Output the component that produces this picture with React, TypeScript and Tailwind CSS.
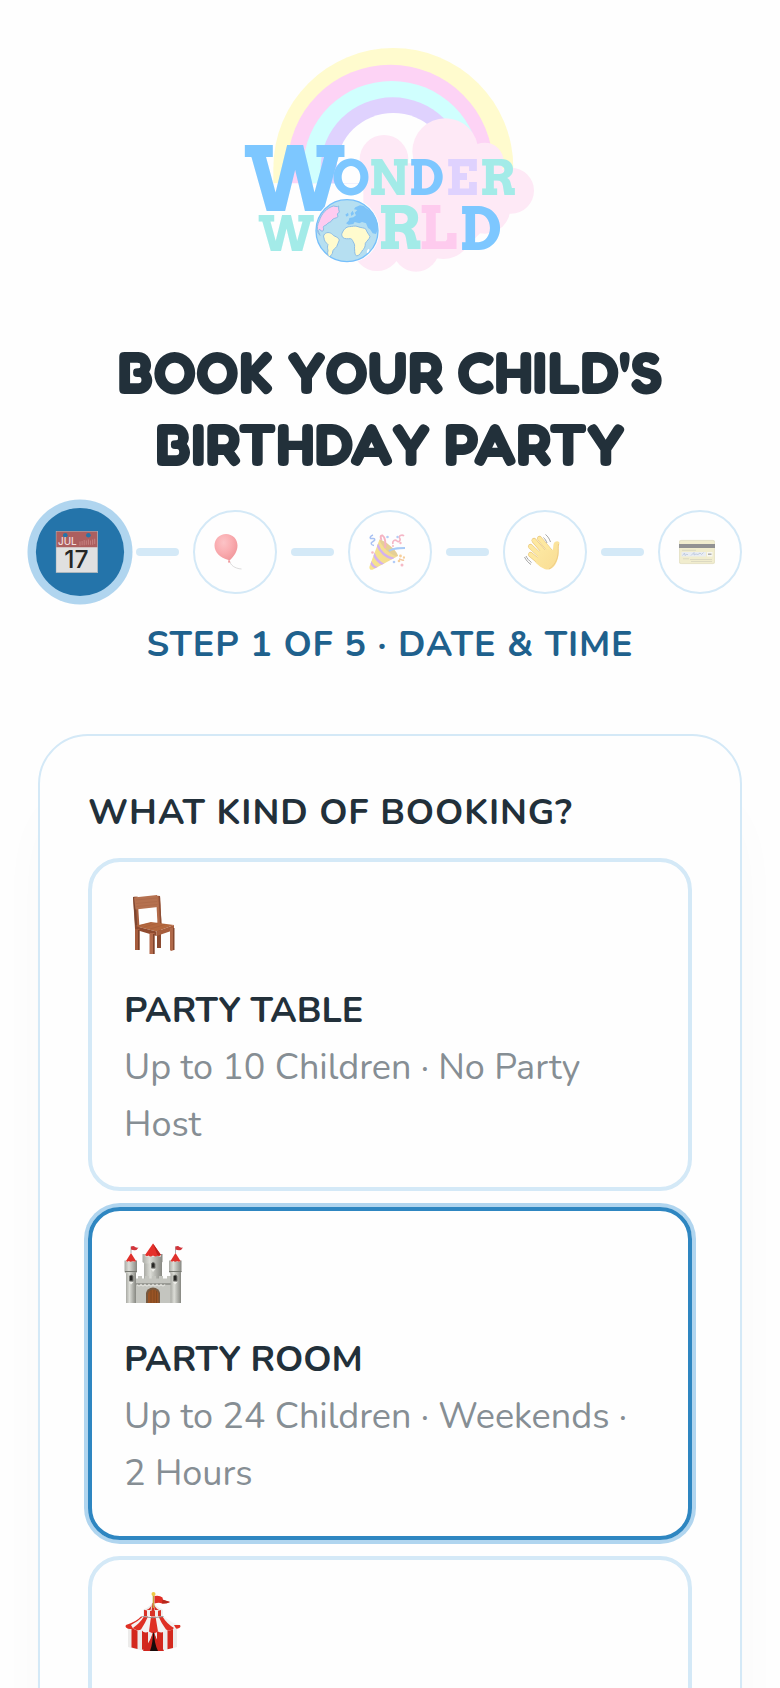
import { Fragment, useState } from 'react'
import type { ReactNode } from 'react'
import clsx from 'clsx'

function Logo() {
  return (
    <svg viewBox="0 0 960 780" className="h-[260px] w-[320px]" role="img" aria-label="Wonder World">
      <path d="M130 460V414a360 360 0 0 1 720 0Z" fill="#fffbce" />
      <path d="M172 460V414a309 310 0 0 1 618 0V460Z" fill="#fdd3f5" />
      <path d="M220 460V414a265 261 0 0 1 530 0V460Z" fill="#d0fffe" />
      <path d="M272 460V414a216 212 0 0 1 432 0V460Z" fill="#dfd2fe" />
      <path d="M320 460V414a170 165 0 0 1 340 0V460Z" fill="#fefefe" />
      <g fill="#fee9f6">
        <circle cx="462" cy="388" r="73" />
        <circle cx="646" cy="364" r="99" />
        <circle cx="764" cy="395" r="57" />
        <circle cx="843" cy="482" r="69" />
        <circle cx="765" cy="535" r="76" />
        <circle cx="640" cy="600" r="87" />
        <circle cx="558" cy="655" r="70" />
        <circle cx="441" cy="650" r="73" />
        <path d="M400 400h390v170l-90 90H400Z" />
      </g>
      <g fontFamily="Arvo, 'DejaVu Serif'" fontWeight="700" textAnchor="middle">
        <text x="194" y="543" fontSize="264" fill="#7dc7ff">W</text>
        <g fontSize="146">
          <text x="364" y="496" fill="#7dc7ff">O</text>
          <text x="476" y="496" fill="#a3ebe8">N</text>
          <text x="590" y="496" fill="#7dc7ff">D</text>
          <text x="696" y="496" fill="#dfd2fe">E</text>
          <text x="803" y="496" fill="#a3ebe8">R</text>
        </g>
        <text x="169" y="662" fontSize="146" fill="#a3ebe8">W</text>
        <g fontSize="176">
          <text x="509" y="657" fill="#a3ebe8">R</text>
          <text x="623" y="657" fill="#fecbee">L</text>
          <text x="752" y="661" fill="#7dc7ff">D</text>
        </g>
      </g>
      <circle cx="351" cy="602" r="98" fill="#fefefe" />
      <circle cx="351" cy="602" r="93" fill="#b6dff1" stroke="#76bffb" strokeWidth="4" />
      <path d="M268 572c6-20 22-38 42-44l12 2 4-2v10l2 8-6 6 2 8c-6 6-14 4-18 10-2 8-12 6-14 12-6 6-12 4-12 10 2 6 0 12-4 12l-8-6-4 4 6 14-6-8c-4-14-2-24 4-36Z" fill="#fecbf0" stroke="#8dbde6" strokeWidth="3" />
      <path d="M376 532l14-6 12 2 6 6 14 8c14 14 22 34 22 54l-6 16-10-2-8-12-6-4-6-14-12-4-8 4-14-4-4 6-14 2-8-4 8-8 2-8 12-2 8-6-4-8 8-8-10-2Z" fill="#7dc3f8" />
      <path d="M346 554l8-6 2 8-6 4ZM362 550l6-8 4 10-8 6Z" fill="#7dc3f8" />
      <path d="M284 612c8-8 20-4 26 4 6 4 16 6 18 14-2 8-6 12-8 20-4 6-12 8-12 16 0 6-6 12-10 14-6-4-6-12-4-18-2-8-2-14 0-18-6-6-12-12-12-20-2-4-2-8 2-12Z" fill="#fffbce" stroke="#8dbde6" strokeWidth="3" />
      <path d="M336 610c4-10 12-20 22-20 8 0 18-4 26 0 8 4 18 2 24 8 2 8 8 14 12 22-2 8-10 12-14 20 0 8-2 16-8 20-4 6-8 16-18 18-6-4-6-12-6-18-2-8 2-14-2-20-4-6-4-12-10-14-8 0-18 2-24-4-2-4-4-8-2-12Z" fill="#fffbce" stroke="#8dbde6" strokeWidth="3" />
      <path d="M416 656c4 2 2 10-3 13-5 0-2-11 3-13Z" fill="#fff" />
    </svg>
  )
}

function CalendarIcon() {
  return (
    <svg viewBox="0 0 40 40" className="size-10" aria-hidden="true">
      <path d="M0 0h40v40H0Z" fill="#e0e0e0" />
      <path d="M0 0h40v15.500H0Z" fill="#ac5f5f" />
      <path d="M0 0h40M0 0v40M40 0v40M0 39.500h40" stroke="#aab6bd" strokeWidth="1" />
      <circle cx="9" cy="4" r="2.200" fill="#2474aa" />
      <circle cx="31" cy="4" r="2.200" fill="#2474aa" />
      <path d="M23 10v4M25 9.500v4M27 8.500v5M29 9v4M31 8v5M33 9v4M35 8v5M37 7.500v5" stroke="#c58080" strokeWidth="1" />
      <text x="2" y="13.800" fontSize="9.500" fontFamily="Inter" fontWeight="500" fill="#f0dcdc">JUL</text>
      <text x="19.500" y="35.500" textAnchor="middle" fontSize="23.500" fontFamily="Inter" fontWeight="500" fill="#262626">17</text>
    </svg>
  )
}

function BalloonIcon() {
  return (
    <svg viewBox="0 0 36 36" className="size-9" aria-hidden="true">
      <defs>
        <radialGradient id="balloon" cx="0.4" cy="0.3" r="0.7">
          <stop offset="0" stopColor="#fcc3c6" />
          <stop offset="0.5" stopColor="#faadb1" />
          <stop offset="1" stopColor="#f09599" />
        </radialGradient>
      </defs>
      <path d="M15.500 27c1 4 5 7.500 12 8" fill="none" stroke="#dcdcdc" strokeWidth="1" />
      <path d="M12 0c6.500 0 11.500 5 11.500 11.500 0 6-3.500 11-8 15l1 2h-2.500l.500-2.500C6 24 .5 18 .5 11.500.5 5 5.500 0 12 0Z" fill="url(#balloon)" />
    </svg>
  )
}

function PopperIcon() {
  return (
    <svg viewBox="0 0 36 36" className="size-9" aria-hidden="true">
      <defs>
        <clipPath id="cone"><path d="M10.500 5.500 29 22 4 35.500c-2.500 1-4-.500-3.500-3Z" /></clipPath>
        <linearGradient id="gold">
          <stop offset="0" stopColor="#f7e48e" />
          <stop offset="1" stopColor="#f0d795" />
        </linearGradient>
      </defs>
      <g clipPath="url(#cone)">
        <path d="M0 0h36v36H0Z" fill="url(#gold)" />
        <path d="M8 10c3 8 8 13 17 15M4.500 19c2 6 6 10 11 12M1 27c2 4 4 7 8 7" fill="none" stroke="#d3b2ee" strokeWidth="2.400" />
      </g>
      <path d="M10.500 5.500C15 6 28 16 29 22c-5 1-17-9-18.500-16.500Z" fill="#e6cf96" />
      <path d="M16 14C17 9 16 3 13.500 1.500 11 1 11.500 4 12.500 6" fill="none" stroke="#f5b3c2" strokeWidth="2" />
      <path d="M20 17c4-3 9-3 16-3" fill="none" stroke="#a9cbf7" strokeWidth="2" />
      <path d="M4 1C1 2 0 5 3 4.500S7 6 4 7.500 2 11 5 11.500" fill="none" stroke="#a9c2f3" strokeWidth="1.500" />
      <path d="M24 10c-1-3 2-5 4-3s4-1 2.500-3S33 0 35 2" fill="none" stroke="#f5b7c7" strokeWidth="1.700" />
      <path d="M30 25c2 0 3 2 5 1" stroke="#f3c9a0" strokeWidth="1.500" fill="none" />
      <g fill="#f6b9c6">
        <circle cx="3.500" cy="18.500" r="1.300" />
        <circle cx="24" cy="12" r="1" />
        <circle cx="33" cy="31" r="1.500" />
        <circle cx="31.500" cy="9" r="1.200" />
      </g>
      <g fill="#b3cdf8">
        <circle cx="18.500" cy="3" r="1.300" />
        <circle cx="25" cy="28" r="1.300" />
        <circle cx="28.500" cy="3" r="1.200" />
      </g>
      <g fill="#f6cf9d">
        <circle cx="31.500" cy="22" r="1.400" />
        <circle cx="35" cy="23.500" r="1.200" />
        <circle cx="30" cy="27" r="1.300" />
      </g>
    </svg>
  )
}

function WaveIcon() {
  return (
    <svg viewBox="0 0 36 36" className="size-9" aria-hidden="true">
      <defs>
        <linearGradient id="skin" x1="0" y1="0" x2="1" y2="1">
          <stop offset="0" stopColor="#fdeaa4" />
          <stop offset="1" stopColor="#f9dc93" />
        </linearGradient>
      </defs>
      <g strokeLinecap="round" fill="none">
        <g stroke="#e8c67e" strokeWidth="5">
          <path d="m15.500 4.500 11 13M10 6.500l13 15M6.500 12.500 20 25M6.500 20.500 18 30" />
        </g>
        <g stroke="#fde8a0" strokeWidth="4">
          <path d="m15.500 4.500 11 13M10 6.500l13 15M6.500 12.500 20 25M6.500 20.500 18 30" />
        </g>
      </g>
      <path d="M24 15l4 1.500c1.500-1 1-3.500 1.500-6 .500-3 4-4 5.500-2.500 1.200 1.500-.500 3-.5 6 0 4 .5 8-1.500 13-2 5.500-6 9-10.500 8.500-3.500-.5-8-4-11-7L16 17Z" fill="url(#skin)" />
      <path d="M34.500 10c-.5 3 0 6-.5 10-.5 5-3.500 12-9 15" fill="none" stroke="#ecc880" strokeWidth=".800" />
      <path d="M19.500 3.500c1.500 1.500 2.500 3 3.500 5.500M21.500.5c2.500 2 4 4.500 5 7.500M.5 23c1.500 3 3.500 5.500 6.500 7.500M2 22c1 2.500 3 4.500 5.500 6.500" fill="none" stroke="#a5a5a5" strokeWidth="1" />
    </svg>
  )
}

function CardIcon() {
  return (
    <svg viewBox="0 0 36 36" className="size-9" aria-hidden="true">
      <rect y="6" width="36" height="24" rx="2" fill="#f1edce" />
      <rect x=".4" y="6.400" width="35.200" height="23.200" rx="2" fill="none" stroke="#e3e0c8" strokeWidth=".800" />
      <path d="M0 10h36v4H0Z" fill="#929292" />
      <path d="M2.500 18h24.500v4.500H2.500Z" fill="#e9edf2" />
      <path d="M28 18h5.500v4.500H28Z" fill="#f7f7f4" />
      <path d="M3.500 21.500l2-2.500.5 2.500 2-1.500 1 1M12 21.500l3-3v2.500l2-1 2 .5 2-1.500 1.500 1.500 2-2" fill="none" stroke="#b7c4dc" strokeWidth=".800" />
      <path d="M29 20.200h3.500" stroke="#a8a8a8" strokeWidth="1.400" />
      <path d="M3 16.300h14M4 24.800h6M11 25.500h22M12 27.500h21" stroke="#dcd9c2" strokeWidth="1" />
    </svg>
  )
}

function ChairIcon() {
  return (
    <svg viewBox="0 0 60 60" className="size-[60px]" aria-hidden="true">
      <path d="M33 35h4v19h-4Z" fill="#8b4a30" />
      <path d="M9 3l4.500-.5 2 32h-4.500Z" fill="#a75f3f" />
      <path d="M9 3l2.500-.3 1.800 31h-2Z" fill="#7c4530" />
      <path d="M32 1.500l4 .5 1.500 28h-4Z" fill="#b36b49" />
      <path d="M34.500 2l1.500 0 1.500 28h-1.500Z" fill="#8d4e35" />
      <path d="M10 3.500 33 1l1 12-22.500 2.500Z" fill="#b57150" />
      <path d="M12 6l21-2M12 9.500l21-2M12.500 12.500l21-2" stroke="#aa6646" strokeWidth=".600" />
      <path d="M11 32l16-4 23 3-17.500 6.500Z" fill="#b4683f" />
      <path d="M14 32l13-3M20 33l14-4M26 35l15-4.500" stroke="#a55d39" strokeWidth=".600" />
      <path d="M11 32l21.500 5.500V42L11 35.500Z" fill="#8f4a2f" />
      <path d="M32.500 37.500 50 31v5l-17.500 6Z" fill="#a85e3d" />
      <path d="M11 35h4.500v21H11Z" fill="#a65c3c" />
      <path d="M14 36h1.500v20H14Z" fill="#7b4029" />
      <path d="M46 34h4v22l-3 1-1-1Z" fill="#b0694a" />
      <path d="M49 34h1.500v22H49Z" fill="#85482f" />
      <path d="M25.500 39h5v21h-5Z" fill="#b3694a" />
      <path d="M29 40h1.500v20H29Z" fill="#7d432c" />
    </svg>
  )
}

function CastleIcon() {
  return (
    <svg viewBox="0 0 60 60" className="size-[60px]" aria-hidden="true">
      <defs>
        <linearGradient id="stone">
          <stop offset="0" stopColor="#a9aaa4" />
          <stop offset=".35" stopColor="#dcddd7" />
          <stop offset="1" stopColor="#868781" />
        </linearGradient>
      </defs>
      <path d="M20 15h18v23H20Z" fill="url(#stone)" />
      <path d="M18.500 11h3v2.500h3V11h3v2.500h4V11h3v2.500h2.500V11h1.500v8l-2 1.500h-16l-2-1.500Z" fill="url(#stone)" />
      <path d="M29 .5 37 12q-2 2-3.500.5-2 2-4.500 0-2.500 2-4.500 0-2 1.500-3.500-.5Z" fill="#e5302b" />
      <path d="M29 .5 37 12l-3.500.5Z" fill="#bd211e" />
      <path d="M10 35.500h4V33h4v2.500h3V33h4v2.500h3V33h4v2.500h3V33h4v2.500h4V33h4V60H10Z" fill="#c4c5bf" />
      <path d="M10 40h38v2H10Z" fill="#999a94" />
      <path d="M13 41.500q2 3 4 0 2 3 4 0 2 3 4 0 2 3 4 0 2 3 4 0 2 3 4 0 2 3 4 0" fill="none" stroke="#e6e6e1" strokeWidth="1.200" />
      <path d="M22 60V50q1-5 7-5.500 6 .5 7 5.500v10Z" fill="#76583f" />
      <path d="M24 60V51q1-4 5-4.500 5 .5 5.500 4.500v9Z" fill="#9a5425" />
      <path d="M27 47v13M30 47v13M32.500 48v12" stroke="#70401d" strokeWidth=".600" />
      <path d="M2 29h10v31H2Z" fill="url(#stone)" />
      <path d="M46.500 29H57v31H46.500Z" fill="url(#stone)" />
      <path d="M.5 17.500h2v1.500h2.500v-1.500h4V19h2v-1.500H13V29l-2 1.500H2L.5 29Z" fill="url(#stone)" />
      <path d="M45 17.500h2v1.500h2.500v-1.500h4V19h2v-1.500H57.500V29l-2 1.500h-9L45 29Z" fill="url(#stone)" />
      <path d="M1 28.500h12M45 28.500h12.500" stroke="#777972" strokeWidth="1" />
      <path d="M7 10l5 8q-2 1.500-3.500 0-2 1.500-3.500 0-1.500 1.500-3 0ZM51.500 10l5 8q-2 1.500-3.500 0-2 1.500-3.500 0-1.500 1.500-3 0Z" fill="#df302b" />
      <path d="M7 10V3.500M51.500 10V3.500" stroke="#999" strokeWidth=".800" />
      <path d="M7 3.500q3-1 4 .5 2 1 3.500.5L12.500 7q-3 .5-5.500-.5ZM51.500 3.500q3-1 4 .5 2 1 3.500.5L57 7q-3 .5-5.500-.5Z" fill="#d2353b" />
      <path d="M27.500 20.500q1.500-2 3.500 0V25h-3.500ZM5.500 33q1.500-2 3.500 0v5H5.500ZM49.500 33q1.500-2 3.500 0v5h-3.500Z" fill="#272725" stroke="#747570" strokeWidth="1" />
      <path d="M5 39h4.500L7 41.500ZM49 39h4.500L51 41.500ZM27 26h4.500L29 29Z" fill="#edede8" />
    </svg>
  )
}

function TentIcon() {
  return (
    <svg viewBox="0 0 60 60" className="size-[60px]" aria-hidden="true">
      <path d="M4 33q24 10 49 0v22q-24 8-49 0Z" fill="#ecebea" />
      <path d="M7.500 36h6v21l-6-1.500ZM18 38h6v20.500l-6-1ZM33 38h6v20l-6 .5ZM43.500 36.500h5.500V56l-5.500 1.300Z" fill="#d3281d" />
      <path d="M17.500 25h23Q46 30 56 33q1 1 0 2.500-3 2.500-6 .5-3 4-8 1.500-3 4.500-8 2-4.500 3.500-9 0-5 2.500-8-2-5 2.500-8-1.500-4 2-7-.5-1-1.500 0-2.500 10-3 15.500-8Z" fill="#f4f3f2" />
      <path d="M19 24.500q-5 5-12 8.500l2 3.500q-4 1.500-7-1-1-1.500 0-2.500 10-3 15-8.500ZM24 24.500q-3 7-7 13-4 2-8-1.500 7-5 11-11.500ZM27 24.500h4.500l2.500 15q-4.500 3.500-9 0ZM34.500 24.500h4q4 7 11.500 11.500-3 4-8 1.500-4.500-6-7.500-13Z" fill="#df3024" />
      <path d="M56 33q1 1 0 2.500-2 1.500-4 1l-2-3.500Z" fill="#df3024" />
      <path d="M19 18h20v6H19Z" fill="#f0efee" />
      <path d="M20 17h3v7h-3ZM26 17h5v7h-5ZM34 17h3v7h-3Z" fill="#d93227" />
      <path d="M29 9.500q2 5 10 8-10 3-20 0 8-3 10-8Z" fill="#efeeed" />
      <path d="M28 12q-1 4-5.500 6h4ZM30 12q1 4 5 6h-4ZM28.500 11h1.500l.5 8h-3Z" fill="#d62d22" />
      <path d="M18.500 24.500q10 2.500 21 0" fill="none" stroke="#999" strokeWidth="1" />
      <path d="M29.500 40 22.500 59H37Z" fill="#170b0a" />
      <path d="M29 39q-2 10-8 16l-2 4h7q3-8 3-20ZM30 39q2 10 8 16l2 4h-6q-4-8-4-20Z" fill="#cf261e" />
      <path d="M29.500 2v14" stroke="#c6a13a" strokeWidth="1.600" />
      <circle cx="29.500" cy="2" r="2" fill="#edc944" />
      <path d="M30.500 4q5-1 8 1.500l.5 2.500 7 2q-4 2-8 1.500-3-1.500-7.500 0Z" fill="#e12e25" />
      <path d="M38.500 7.500l7.500 2.500q-4 2-8 1.500Z" fill="#b5281c" />
    </svg>
  )
}

const steps: { label: string; icon: ReactNode }[] = [
  { label: 'Date & Time', icon: <CalendarIcon /> },
  { label: 'Party', icon: <BalloonIcon /> },
  { label: 'Extras', icon: <PopperIcon /> },
  { label: 'Details', icon: <WaveIcon /> },
  { label: 'Payment', icon: <CardIcon /> },
]

const bookings = [
  { id: 'table', icon: <ChairIcon />, title: 'Party Table', text: 'Up to 10 Children · No Party Host' },
  { id: 'room', icon: <CastleIcon />, title: 'Party Room', text: 'Up to 24 Children · Weekends · 2 Hours' },
  { id: 'venue', icon: <TentIcon />, title: '', text: '' },
]

export default function App() {
  const [booking, setBooking] = useState('room')
  const current = 0

  return (
    <div className="h-screen overflow-hidden bg-[#fefefe] font-['Nunito',sans-serif] text-[36px] leading-[57px] text-[#22303a]">
      <main className="px-[38px] pt-[30px]">
        <header className="flex flex-col items-center">
          <Logo />
          <h1 className="mt-[46px] max-w-[640px] text-center font-['Fredoka','Nunito',sans-serif] text-[59px] leading-[72px] font-bold uppercase">
            Book your child's birthday party
          </h1>
        </header>

        <ol className="mt-[30px] flex items-center">
          {steps.map((step, i) => (
            <Fragment key={step.label}>
              {i > 0 && <li aria-hidden="true" className="mx-3.5 h-2 flex-1 rounded-full bg-[#d4e9f7]" />}
              <li
                aria-label={step.label}
                aria-current={i === current ? 'step' : undefined}
                className={clsx(
                  'flex size-[84px] items-center justify-center rounded-full pr-1.5',
                  i === current ? 'scale-105 bg-[#2474aa] ring-8 ring-[#b0d5ef]' : 'border-2 border-[#d4e9f7]',
                )}
              >
                {step.icon}
              </li>
            </Fragment>
          ))}
        </ol>
        <p className="mt-[22px] text-center font-bold tracking-wide text-[#1f618d] uppercase">Step 1 of 5 · Date &amp; Time</p>

        <section className="mt-[61px] rounded-[50px] border-2 border-[#d4e9f7] p-12 shadow-[0_64px_64px_-16px_rgba(34,48,58,0.04)]">
          <h2 className="font-bold tracking-wide uppercase">What kind of booking?</h2>
          <div className="mt-[17px] flex flex-col gap-4">
            {bookings.map(b => (
              <button
                key={b.id}
                type="button"
                aria-label={b.title || 'Venue hire'}
                aria-pressed={booking === b.id}
                onClick={() => setBooking(b.id)}
                className={clsx(
                  'flex min-h-[333px] flex-col items-start rounded-[32px] border-4 p-8 text-left',
                  booking === b.id ? 'border-[#2e86c1] ring-4 ring-[#b0d5ef]' : 'border-[#d4e9f7]',
                )}
              >
                {b.icon}
                <span className="mt-7 font-bold uppercase">{b.title}</span>
                <span className="text-[#868e94]">{b.text}</span>
              </button>
            ))}
          </div>
        </section>
      </main>
    </div>
  )
}
